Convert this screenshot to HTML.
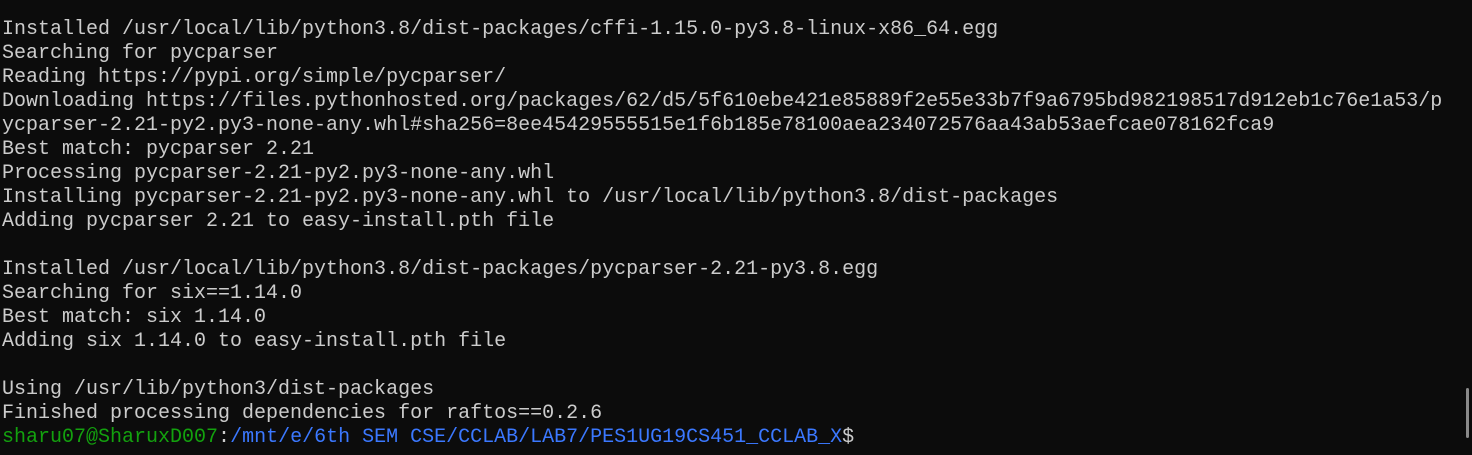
<!DOCTYPE html>
<html><head><style>
html,body{margin:0;padding:0;background:#0c0c0c;width:1472px;height:455px;overflow:hidden}
pre{position:absolute;left:2px;top:18px;margin:0;font-family:"Liberation Mono",monospace;font-size:20px;line-height:24px;color:#cccccc;white-space:pre}
.g{color:#13a10e}.b{color:#3b78ff}
.sb{position:absolute;left:1466px;top:388px;width:3px;height:50px;background:#8a8a8a;border-radius:2px}
</style></head><body>
<pre>Installed /usr/local/lib/python3.8/dist-packages/cffi-1.15.0-py3.8-linux-x86_64.egg
Searching for pycparser
Reading https://pypi.org/simple/pycparser/
Downloading https://files.pythonhosted.org/packages/62/d5/5f610ebe421e85889f2e55e33b7f9a6795bd982198517d912eb1c76e1a53/p
ycparser-2.21-py2.py3-none-any.whl#sha256=8ee45429555515e1f6b185e78100aea234072576aa43ab53aefcae078162fca9
Best match: pycparser 2.21
Processing pycparser-2.21-py2.py3-none-any.whl
Installing pycparser-2.21-py2.py3-none-any.whl to /usr/local/lib/python3.8/dist-packages
Adding pycparser 2.21 to easy-install.pth file

Installed /usr/local/lib/python3.8/dist-packages/pycparser-2.21-py3.8.egg
Searching for six==1.14.0
Best match: six 1.14.0
Adding six 1.14.0 to easy-install.pth file

Using /usr/lib/python3/dist-packages
Finished processing dependencies for raftos==0.2.6
<span class="g">sharu07@SharuxD007</span>:<span class="b">/mnt/e/6th SEM CSE/CCLAB/LAB7/PES1UG19CS451_CCLAB_X</span>$</pre>
<div class="sb"></div>
</body></html>
